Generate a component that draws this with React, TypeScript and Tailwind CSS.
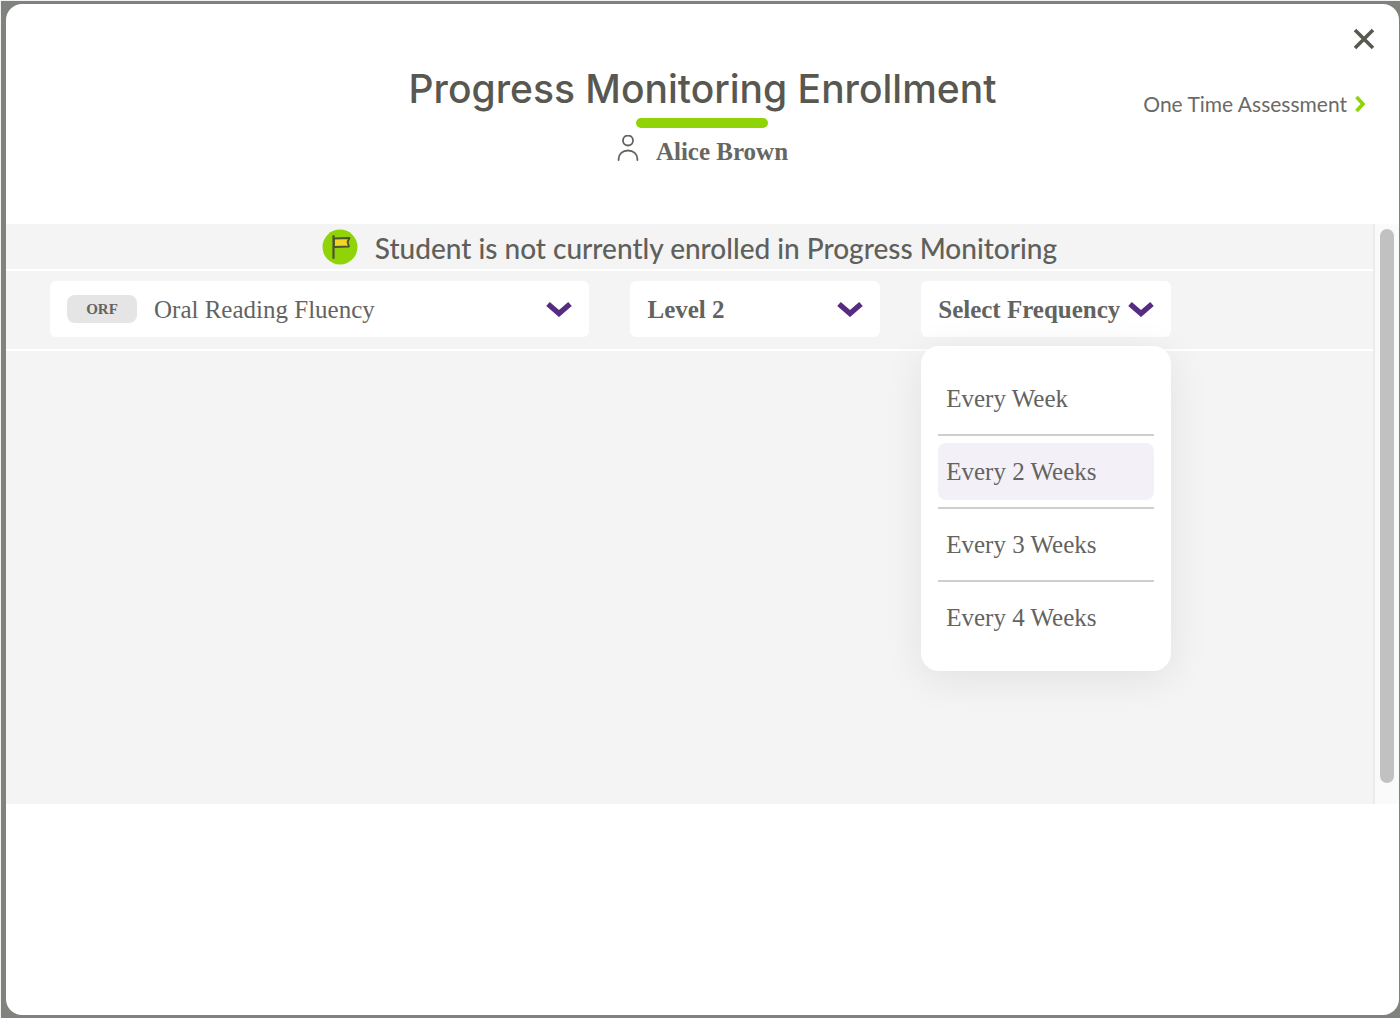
import { useState } from "react";
import type { MouseEvent } from "react";

const frequencies = ["Every Week", "Every 2 Weeks", "Every 3 Weeks", "Every 4 Weeks"];

function Chevron() {
  return (
    <svg
      viewBox="0 0 26 16"
      className="pointer-events-none h-4 w-[26px] shrink-0"
      fill="none"
      aria-hidden="true"
    >
      <path d="M2 3L13 12.5L24 3" stroke="#562c82" strokeWidth="5.4" />
    </svg>
  );
}

function PersonIcon() {
  return (
    <svg
      viewBox="0 0 22 28"
      className="h-7 w-[22px]"
      fill="none"
      stroke="#63635f"
      strokeWidth="1.8"
      strokeLinecap="round"
      aria-hidden="true"
    >
      <circle cx="11" cy="5.5" r="5" />
      <path d="M1.6 25V24C1.6 19 5.6 15.5 11 15.5S20.4 19 20.4 24V25" />
    </svg>
  );
}

function FlagIcon() {
  return (
    <svg viewBox="0 0 36 36" className="h-9 w-9" aria-hidden="true">
      <circle cx="18" cy="18" r="17.5" fill="#90d408" />
      <path
        d="M12 9.5L27.5 9L25.5 13L27 17.5L12 18Z"
        fill="#f3d625"
        stroke="#4d5230"
        strokeWidth="1.8"
        strokeLinejoin="round"
      />
      <path d="M11.5 7V29" stroke="#4d5230" strokeWidth="2.2" strokeLinecap="round" />
    </svg>
  );
}

function Header() {
  return (
    <header className="grid h-[220px] shrink-0 grid-cols-[1fr_auto_1fr]">
      <div />
      <div className="flex flex-col items-center pt-[61px]">
        <h1 className="font-[Inter,sans-serif] text-[39px] leading-[48px] font-medium whitespace-nowrap text-[#585851]">
          Progress Monitoring Enrollment
        </h1>
        <div className="mt-[5px] h-[10px] w-[132px] rounded-full bg-[#90d408]" />
        <div className="mt-1 flex items-center gap-[17px]">
          <PersonIcon />
          <p className="pt-[6px] text-[25px] leading-7 font-bold text-[#666662]">Alice Brown</p>
        </div>
      </div>
      <div className="flex flex-col items-end pt-6">
        <button type="button" aria-label="Close" className="mr-6 h-[22px] w-[22px]">
          <svg viewBox="0 0 22 22" fill="none" aria-hidden="true">
            <path d="M2 2L20 20M20 2L2 20" stroke="#585851" strokeWidth="3.6" />
          </svg>
        </button>
        <a
          href="#one-time"
          className="mt-10 mr-[34px] flex items-center gap-2 font-[Lato,sans-serif] text-[21px] leading-7 text-[#6a6a66]"
        >
          One Time Assessment
          <svg viewBox="0 0 10 18" className="h-[18px] w-[10px]" fill="none" aria-hidden="true">
            <path d="M1.5 2L8 9L1.5 16" stroke="#90d408" strokeWidth="3.6" />
          </svg>
        </a>
      </div>
    </header>
  );
}

function Filters() {
  const [open, setOpen] = useState(true);
  const [frequency, setFrequency] = useState("");

  const toggle = (e: MouseEvent) => {
    e.preventDefault();
    setOpen(!open);
  };

  return (
    <div className="border-b-2 border-white pt-[10px] pr-6 pb-3 pl-11 text-[25px] text-[#63635f]">
      <div className="grid max-w-[1121px] grid-cols-[54fr_25fr_25fr] gap-[41px]">
        <div className="flex h-14 items-center rounded-md bg-white px-[17px]">
          <span className="w-[70px] rounded-lg bg-[#e5e5e5] text-center text-[15px] leading-7 font-bold">
            ORF
          </span>
          <select
            aria-label="Measure"
            className="-mr-[26px] h-full min-w-0 flex-1 appearance-none pt-0.5 pl-[17px] outline-none"
          >
            <option>Oral Reading Fluency</option>
          </select>
          <Chevron />
        </div>
        <div className="flex h-14 items-center rounded-md bg-white px-[17px]">
          <select
            aria-label="Level"
            className="-mr-[26px] h-full min-w-0 flex-1 appearance-none pt-0.5 font-bold outline-none"
          >
            <option>Level 2</option>
          </select>
          <Chevron />
        </div>
        <div className="relative">
          <div className="flex h-14 items-center rounded-md bg-white px-[17px]">
            <select
              aria-label="Frequency"
              value={frequency}
              onMouseDown={toggle}
              onChange={(e) => setFrequency(e.target.value)}
              className="-mr-[26px] h-full min-w-0 flex-1 appearance-none pt-0.5 font-bold outline-none"
            >
              <option value="">Select Frequency</option>
              {frequencies.map((item) => (
                <option key={item}>{item}</option>
              ))}
            </select>
            <Chevron />
          </div>
          {open && (
            <ul className="absolute inset-x-0 top-full z-10 mt-[9px] divide-y-2 divide-[#d0cdd2] rounded-[18px] bg-white px-[17px] pt-[17px] pb-[18px] shadow-[0_8px_40px_rgba(0,0,0,0.08)]">
              {frequencies.map((item) => (
                <li key={item} className="py-[7px]">
                  <button
                    type="button"
                    onClick={() => {
                      setFrequency(item);
                      setOpen(false);
                    }}
                    className={`h-[57px] w-full rounded-lg px-2 text-left ${
                      item === "Every 2 Weeks" ? "bg-[#f3f0f8]" : "hover:bg-[#f3f0f8]"
                    }`}
                  >
                    {item}
                  </button>
                </li>
              ))}
            </ul>
          )}
        </div>
      </div>
    </div>
  );
}

function App() {
  return (
    <div className="flex min-h-screen border-t border-l border-[#f2f2f2] bg-[#80827d] pt-[3px] pr-px pb-[3px] pl-[5px] font-['Liberation_Serif',serif]">
      <main className="flex flex-1 flex-col rounded-2xl bg-white">
        <Header />
        <section className="flex min-h-[57vh] bg-[#f4f4f4]">
          <div className="flex-1 border-r-2 border-[#ebebeb]">
            <div className="flex h-[47px] items-center justify-center gap-[17px] border-b-2 border-white">
              <FlagIcon />
              <p className="pt-0.5 font-[Lato,sans-serif] text-[28px] leading-8 font-medium text-[#60605b]">
                Student is not currently enrolled in Progress Monitoring
              </p>
            </div>
            <Filters />
          </div>
          <div className="w-6 bg-[#fafafa] pt-[5px] pl-[5px]">
            <div className="h-[55vh] max-h-[554px] w-[14px] rounded-full bg-[#c1c1c1]" />
          </div>
        </section>
      </main>
    </div>
  );
}

export default App;
